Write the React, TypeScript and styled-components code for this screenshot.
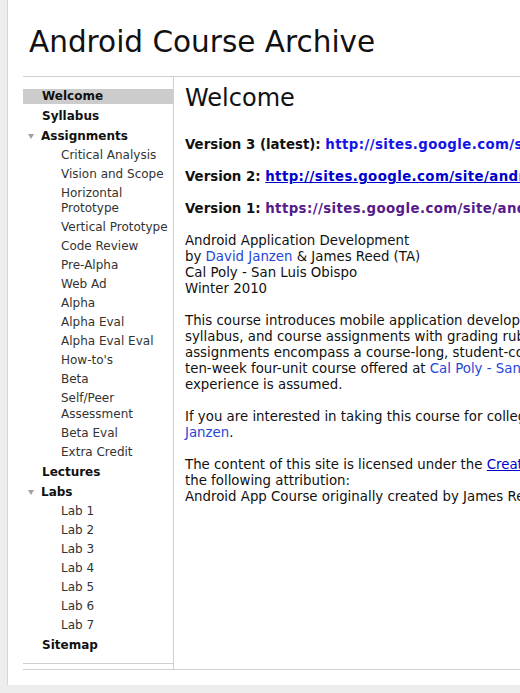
import styled, { createGlobalStyle } from 'styled-components';

const GlobalStyle = createGlobalStyle`
  *, *::before, *::after {
    box-sizing: border-box;
  }
  html, body {
    margin: 0;
    padding: 0;
    overflow: hidden;
    background: #ededed;
    font-family: "DejaVu Sans", Verdana, sans-serif;
  }
`;

const Page = styled.div`
  margin-left: 7px;
  width: 1100px;
  padding-bottom: 15px;
  background: #fff;
  border-left: 1px solid #d6d6d6;
`;

const Header = styled.header`
  padding: 26px 0 18px 21px;
`;

const SiteTitle = styled.h1`
  margin: 0;
  font-size: 29.5px;
  line-height: 32px;
  font-weight: normal;
  color: #111;
`;

const Main = styled.div`
  display: flex;
  align-items: flex-start;
  margin-left: 15px;
  border-top: 1px solid #cfcfcf;
  border-bottom: 1px solid #cfcfcf;
`;

const Sidebar = styled.nav`
  width: 150px;
  flex-shrink: 0;
  padding: 9px 0 8px;
  border-bottom: 1px solid #cfcfcf;
  font-size: 12px;
`;

const Row = styled.div<{ $sub?: boolean }>`
  display: flex;
  align-items: center;
  padding: ${(p) => (p.$sub ? '1.75px 0' : '2.5px 0')};
`;

const Label = styled.div<{ $sub?: boolean; $active?: boolean; $indent: number }>`
  flex: 1;
  padding-left: ${(p) => p.$indent}px;
  padding-right: 4px;
  line-height: ${(p) => (p.$sub ? '15.5px' : '15px')};
  font-weight: ${(p) => (p.$sub ? 'normal' : 'bold')};
  color: ${(p) => (p.$sub ? '#333' : '#111')};
  background: ${(p) => (p.$active ? '#cccccc' : 'transparent')};
`;

const Caret = styled.span`
  width: 0;
  height: 0;
  margin: 0 7px 0 5px;
  border-left: 3.5px solid transparent;
  border-right: 3.5px solid transparent;
  border-top: 5px solid #a0a0a0;
`;

const Content = styled.main`
  flex: 1;
  min-height: 592px;
  padding: 7px 0 0 11px;
  border-left: 1px solid #cfcfcf;
  font-size: 13.33px;
  line-height: 16px;
  color: #111;
`;

const PageTitle = styled.h2`
  margin: 0 0 25px;
  font-size: 24px;
  line-height: 28px;
  font-weight: normal;
`;

const Para = styled.p<{ $bold?: boolean }>`
  margin: 0 0 16px;
  white-space: nowrap;
  font-weight: ${(p) => (p.$bold ? 'bold' : 'normal')};
`;

const Link = styled.a<{ $tone?: 'bright' | 'plain' | 'visited' | 'soft'; $wide?: boolean }>`
  color: ${(p) =>
    p.$tone === 'visited'
      ? '#551a8b'
      : p.$tone === 'plain'
      ? '#0000cc'
      : p.$tone === 'bright'
      ? '#1414e6'
      : '#2546d8'};
  text-decoration: ${(p) => (p.$tone === 'plain' ? 'underline' : 'none')};
  letter-spacing: ${(p) => (p.$wide ? '0.4px' : 'normal')};
`;

type NavItem = { label: string; active?: boolean; children?: string[] };

const nav: NavItem[] = [
  { label: 'Welcome', active: true },
  { label: 'Syllabus' },
  {
    label: 'Assignments',
    children: [
      'Critical Analysis',
      'Vision and Scope',
      'Horizontal Prototype',
      'Vertical Prototype',
      'Code Review',
      'Pre-Alpha',
      'Web Ad',
      'Alpha',
      'Alpha Eval',
      'Alpha Eval Eval',
      "How-to's",
      'Beta',
      'Self/Peer Assessment',
      'Beta Eval',
      'Extra Credit',
    ],
  },
  { label: 'Lectures' },
  {
    label: 'Labs',
    children: ['Lab 1', 'Lab 2', 'Lab 3', 'Lab 4', 'Lab 5', 'Lab 6', 'Lab 7'],
  },
  { label: 'Sitemap' },
];

function App() {
  return (
    <>
      <GlobalStyle />
      <Page>
        <Header>
          <SiteTitle>Android Course Archive</SiteTitle>
        </Header>
        <Main>
          <Sidebar>
            {nav.map((item) => (
              <div key={item.label}>
                <Row>
                  {item.children ? (
                    <>
                      <Caret />
                      <Label $indent={0}>{item.label}</Label>
                    </>
                  ) : (
                    <Label $indent={19} $active={item.active}>
                      {item.label}
                    </Label>
                  )}
                </Row>
                {item.children?.map((child) => (
                  <Row $sub key={child}>
                    <Label $sub $indent={38}>
                      {child}
                    </Label>
                  </Row>
                ))}
              </div>
            ))}
          </Sidebar>
          <Content>
            <PageTitle>Welcome</PageTitle>
            <Para $bold>
              Version 3 (latest):{' '}
              <Link $tone="bright" $wide>
                http://sites.google.com/site/androidappcourse/
              </Link>
            </Para>
            <Para $bold>
              Version 2:{' '}
              <Link $tone="plain" $wide>
                http://sites.google.com/site/androidcoursearchive/v2
              </Link>
            </Para>
            <Para $bold>
              Version 1:{' '}
              <Link $tone="visited" $wide>
                https://sites.google.com/site/androidcoursearchive/v1
              </Link>
            </Para>
            <Para>
              Android Application Development
              <br />
              by <Link>David Janzen</Link> &amp; James Reed (TA)
              <br />
              Cal Poly - San Luis Obispo
              <br />
              Winter 2010
            </Para>
            <Para>
              This course introduces mobile application development for the Android platform. It includes lectures, a
              <br />
              syllabus, and course assignments with grading rubrics. Many of the labs and
              <br />
              assignments encompass a course-long, student-conceived project. The course was designed as a
              <br />
              ten-week four-unit course offered at <Link>Cal Poly - San Luis Obispo</Link>. Some prior Java programming
              <br />
              experience is assumed.
            </Para>
            <Para>
              If you are interested in taking this course for college credit, please contact <Link>David</Link>
              <br />
              <Link>Janzen</Link>.
            </Para>
            <Para>
              The content of this site is licensed under the{' '}
              <Link $tone="plain">Creative Commons Attribution 3.0 License</Link>. Please use
              <br />
              the following attribution:
              <br />
              Android App Course originally created by James Reed and David Janzen
            </Para>
          </Content>
        </Main>
      </Page>
    </>
  );
}

export default App;
